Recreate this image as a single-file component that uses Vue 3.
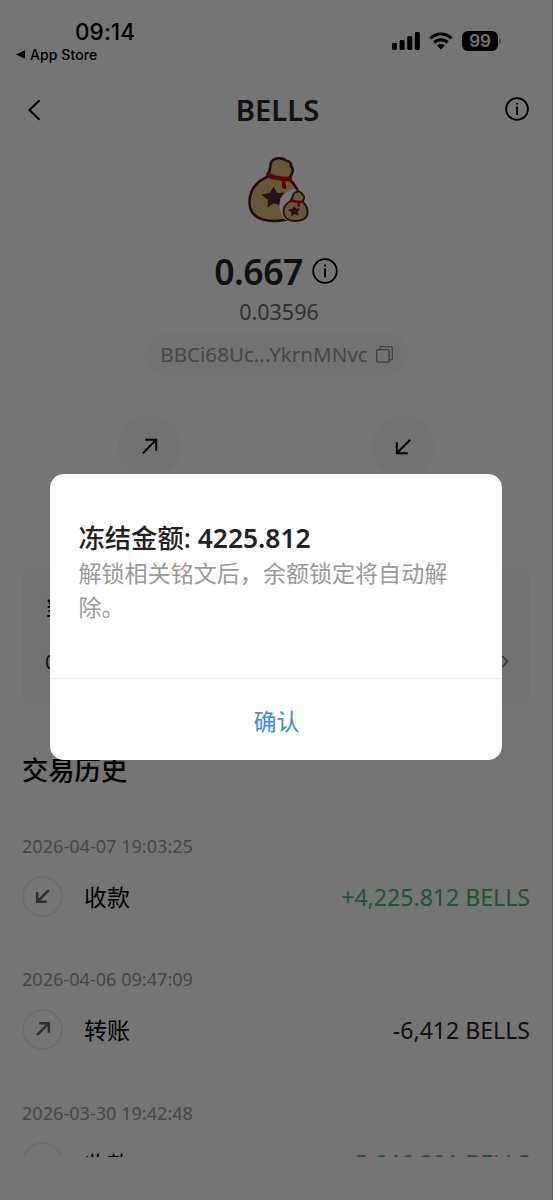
<script setup>
const arrows = {
  out: 'M5 19 18.5 5.5M7.5 5h11.5v11.5',
  in: 'M19 5 5.5 18.5M5 7.5v11.5h11.5',
}
const transactions = [
  { date: '2026-04-07 19:03:25', label: '收款', dir: 'in', amount: '+4,225.812 BELLS' },
  { date: '2026-04-06 09:47:09', label: '转账', dir: 'out', amount: '-6,412 BELLS' },
  { date: '2026-03-30 19:42:48', label: '收款', dir: 'in', amount: '+5,646.201 BELLS' },
]
</script>

<template>
  <div class="screen">
    <header class="status">
      <div class="clock">
        <div class="time">09:14</div>
        <div class="return">
          <svg width="9" height="9" viewBox="0 0 9 9"><path d="M0 4.5 9 .2v8.6z" /></svg>
          <span>App Store</span>
        </div>
      </div>
      <div class="indicators">
        <svg class="signal" width="28" height="18" viewBox="0 0 28 18">
          <rect x="0" y="11" width="5" height="7" rx="1.4" />
          <rect x="7.6" y="8" width="5" height="10" rx="1.4" />
          <rect x="15.2" y="4" width="5" height="14" rx="1.4" />
          <rect x="22.8" y="0" width="5" height="18" rx="1.4" />
        </svg>
        <svg class="wifi" width="24" height="18" viewBox="0 0 24 18">
          <path d="M1.4 6.3a15.2 15.2 0 0 1 21.2 0" />
          <path d="M5.3 10.6a9.6 9.6 0 0 1 13.4 0" />
          <path class="dot" d="M8.2 13.6a5.6 5.6 0 0 1 7.6 0L12 17.5z" />
        </svg>
        <div class="battery">99</div>
        <i class="cap"></i>
      </div>
    </header>

    <nav class="nav">
      <svg class="back" width="13" height="22" viewBox="0 0 13 22"><path d="M11.6 1.2 1.4 11l10.2 9.8" /></svg>
      <h1>BELLS</h1>
      <svg class="info" width="24" height="24" viewBox="0 0 24 24">
        <circle cx="12" cy="12" r="10.9" /><path d="M12 9.5v8.5M12 6v1.6" />
      </svg>
    </nav>

    <section class="summary">
      <svg class="coin" width="62" height="68" viewBox="0 0 62 68">
        <path class="bag" d="M20 17C24 12 20 5 26 2.5c4-2 9-1.500 13 1.500 3 0 4.500 3 4 5.500 3 3 2 6 0 9l-2 3c7 7 12 16 11 26-1 12-12 16.500-25 16.500C12 64 2 59 1.500 46 1.200 33 8 25 19 20z" />
        <path class="ribbon" d="M19 14.500c7 4.500 16 6 25 5l-.5 4.500-6.500.3 1.500 7c-2.500 1.500-4.500.5-4.500-2l-.3-5.500c-6-.5-11.500-2-16-4.500z" />
        <path class="star" d="m25.500 29.500 3.600 6.500 7.500-.5-4.700 6 2 7.500-7.800-2.800-6.600 4.300.3-7.700-6.300-5 8.500-2z" />
        <path class="gap" d="M47 31.500c-7 1-15 7.500-15.500 15-.3 8 3 13.500 6 16.500l8-2 6-24z" />
        <path class="bag small" d="M43 43c2.500-2 .5-5.500 4-7.500 3-1.500 6-.5 7.500 2 2 1 2 4 1 5.500l-1 1.500c3 3 5.500 7 5 11.500-.5 6-5.500 8-12.500 8S36 61 35.500 55c-.2-5 3-9 7.500-11z" />
        <path class="ribbon" d="M42.500 41.500c4 2 8 2.500 12.500 2l-.2 2.500-3.300.2.500 3.300-2 .2-.5-3.500c-3-.2-5.500-1-8-2z" />
        <path class="star" d="m46.300 48.700 1.800 3 4-.2-2.400 3.200.9 3.800-3.900-1.400-3.600 2.200.2-4-3.100-2.600 4.200-.9z" />
      </svg>
      <div class="balance">
        <strong>0.667</strong>
        <svg class="info" width="26" height="26" viewBox="0 0 26 26">
          <circle cx="13" cy="13" r="11.800" /><path d="M13 10.500v9M13 6.500v2" />
        </svg>
      </div>
      <div class="fiat">0.03596</div>
      <div class="address">
        <span>BBCi68Uc...YkrnMNvc</span>
        <svg width="17" height="17" viewBox="0 0 17 17">
          <rect x=".7" y="3.700" width="12.400" height="12.400" rx="1" /><path d="M4 .7h11a1.300 1.300 0 0 1 1.300 1.300v10.500a1.300 1.300 0 0 1-1.300 1.300M4 .7v3M13 13.800h2" />
        </svg>
      </div>
    </section>

    <section class="actions">
      <button class="round"><svg viewBox="0 0 24 24"><path :d="arrows.out" /></svg></button>
      <button class="round"><svg viewBox="0 0 24 24"><path :d="arrows.in" /></svg></button>
    </section>

    <section class="card">
      <div class="card-title">当</div>
      <div class="card-row">
        <span>0</span>
        <svg width="8" height="13" viewBox="0 0 8 13"><path d="m1.200 1 5.300 5.500L1.200 12" /></svg>
      </div>
    </section>

    <section class="history">
      <h2>交易历史</h2>
      <div class="list">
        <article v-for="tx in transactions" :key="tx.date" class="tx">
          <time>{{ tx.date }}</time>
          <div class="tx-row">
            <span class="badge"><svg viewBox="0 0 24 24"><path :d="arrows[tx.dir]" /></svg></span>
            <span class="tx-label">{{ tx.label }}</span>
            <span class="amount" :class="tx.dir">{{ tx.amount }}</span>
          </div>
        </article>
      </div>
    </section>

    <div class="overlay">
      <div class="dialog">
        <div class="dialog-body">
          <h3>冻结金额: <span>4225.812</span></h3>
          <p>解锁相关铭文后，余额锁定将自动解除。</p>
        </div>
        <button class="confirm">确认</button>
      </div>
    </div>
  </div>
</template>

<style>
body { background: #757575; }
</style>

<style scoped>
* { box-sizing: border-box; }
h1, h2, h3, p { margin: 0; }
button { border: 0; padding: 0; font: inherit; }
svg { display: block; flex: none; fill: none; stroke: #000; }
.screen {
  position: relative;
  width: 553px;
  height: 1200px;
  overflow: hidden;
  background: #fff;
  color: #252525;
  font-family: "Noto Sans", "Noto Sans CJK SC", sans-serif;
}
.status {
  display: flex;
  justify-content: space-between;
  height: 78px;
  padding: 18px 52px 0 16px;
  font-family: Inter, sans-serif;
  color: #000;
}
.time { padding-left: 59px; font-size: 22.5px; line-height: 27px; font-weight: 500; letter-spacing: 0.1px; }
.return { display: flex; align-items: center; gap: 5px; height: 18px; font-size: 14px; font-weight: 500; letter-spacing: 0.1px; }
.return svg { fill: #000; stroke: none; }
.indicators { display: flex; align-items: center; height: 45px; }
.signal { fill: #000; stroke: none; }
.wifi { margin-left: 9px; stroke-width: 3.2; }
.wifi .dot { fill: #000; stroke: none; }
.battery {
  margin-left: 9px;
  width: 36px;
  height: 20px;
  border-radius: 6px;
  background: #000;
  color: #fff;
  font-size: 17px;
  font-weight: 600;
  line-height: 20px;
  text-align: center;
}
.cap { width: 2px; height: 6px; margin-left: 1px; border-radius: 0 2px 2px 0; background: #aaa; }
.nav { display: flex; justify-content: space-between; align-items: center; height: 64px; padding: 0 24px 0 28px; }
.nav h1 { width: 100px; margin-left: 9px; text-align: center; font-size: 29.2px; line-height: 38px; font-weight: 600; }
.nav .info { margin-top: -3px; }
.back { stroke-width: 2; }
.info { stroke-width: 1.8; }
.summary { display: flex; flex-direction: column; align-items: center; padding-top: 15px; }
.coin { margin-left: 5px; }
.bag { fill: #dcbf73; stroke: #482027; stroke-width: 2.6; }
.small { stroke-width: 1.8; }
.ribbon { fill: #c80b1c; stroke: none; }
.star { fill: #512832; stroke: none; }
.gap { fill: #fff; stroke: none; }
.balance { display: flex; align-items: center; gap: 9px; height: 48px; margin-top: 22px; padding-right: 1px; }
.balance strong { font-size: 35.6px; line-height: 48px; font-weight: 600; letter-spacing: -0.5px; }
.fiat { height: 34px; padding-left: 5px; font-size: 21.5px; line-height: 34px; color: #6c6c6c; }
.address {
  display: flex;
  align-items: center;
  gap: 8px;
  height: 41px;
  margin-top: 5px;
  padding: 0 15px 1px;
  border-radius: 21px;
  background: #f8f8f8;
  color: #999;
  font-size: 20.6px;
}
.address svg { stroke: #888; stroke-width: 1.3; }
.actions { display: flex; justify-content: space-between; height: 152px; margin-top: 40px; padding: 0 118px; }
.round { display: grid; place-items: center; width: 63px; height: 63px; border-radius: 50%; background: #f8f8f8; }
.round svg { width: 23px; height: 23px; stroke-width: 2; }
.card { height: 138px; margin: 0 23px 0 22px; padding: 24px 21px 0 23px; border-radius: 14px; background: #f8f8f8; }
.card-title { height: 36px; font-size: 20px; line-height: 36px; font-weight: 500; color: #000; }
.card-row { display: flex; justify-content: space-between; align-items: center; height: 36px; margin-top: 16px; font-size: 20px; }
.card-row svg { stroke: #777; stroke-width: 1.8; }
.history { margin-top: 45px; padding: 0 23px 0 22px; }
.history h2 { height: 40px; font-size: 26.3px; line-height: 40px; font-weight: 500; color: #000; }
.list { height: 367px; padding-top: 43px; overflow: hidden; }
.tx { height: 133.3px; }
.tx time { display: block; height: 26px; font-size: 18.1px; line-height: 26px; color: #999; }
.tx-row { display: flex; align-items: center; height: 42px; margin-top: 16px; }
.badge { display: grid; place-items: center; width: 41px; height: 41px; border: 2px solid #ececec; border-radius: 50%; }
.badge svg { width: 20px; height: 20px; stroke: #666; stroke-width: 3; }
.tx-label { margin-left: 21px; font-size: 23px; color: #000; }
.amount { margin-left: auto; padding-top: 1px; font-size: 23.1px; color: #252525; }
.amount.in { color: #35bd69; }
.overlay {
  position: absolute;
  inset: 0;
  display: flex;
  align-items: flex-start;
  justify-content: center;
  padding: 474px 0 0;
  border-right: 1px solid rgba(0, 0, 0, .2);
  background: rgba(0, 0, 0, .54);
}
.dialog { width: 452px; height: 286px; overflow: hidden; border-radius: 14px; background: #fff; }
.dialog-body { height: 205px; padding: 46px 28px 0 28.5px; border-bottom: 1px solid #eee; }
.dialog h3 { font-size: 26.3px; line-height: 36px; font-weight: 500; color: #222; }
.dialog h3 span { font-size: 26.4px; font-weight: 600; }
.dialog p { font-size: 23.05px; line-height: 34px; color: #999; }
.confirm { display: block; width: 100%; height: 81px; padding: 1px 0 0 1px; background: none; color: #3d8bdd; font-size: 23px; }
</style>
